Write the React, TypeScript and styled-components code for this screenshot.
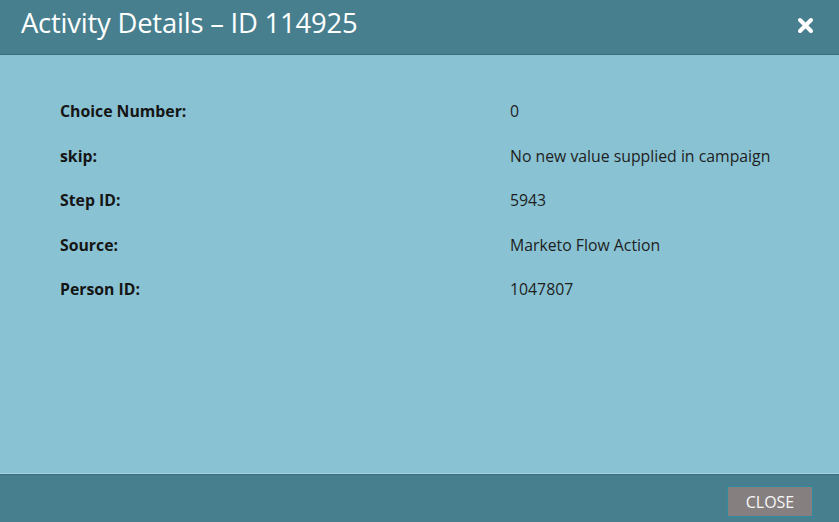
import React from "react";
import styled, { createGlobalStyle } from "styled-components";

const Global = createGlobalStyle`
  html, body { margin: 0; padding: 0; height: 100%; }
  body { font-family: "Open Sans", "DejaVu Sans", sans-serif; background: #89c3d3; }
  #root { height: 100%; }
`;

const Dialog = styled.div`
  width: 839px;
  height: 522px;
  display: flex;
  flex-direction: column;
  background: #89c3d3;
  overflow: hidden;
`;

const Header = styled.div`
  flex: none;
  height: 55px;
  box-sizing: border-box;
  background: #477f8f;
  border-bottom: 1px solid #3b6e7c;
  display: flex;
  align-items: center;
  justify-content: space-between;
  padding: 0 25px 0 21px;
`;

const Title = styled.h1`
  margin: 0;
  font-size: 27.4px;
  font-weight: 400;
  color: #ffffff;
  letter-spacing: -0.2px;
  line-height: 1;
  padding-bottom: 9px;
`;

const CloseIcon = styled.button`
  border: none;
  background: transparent;
  padding: 0;
  width: 18px;
  height: 18px;
  display: flex;
  align-items: center;
  justify-content: center;
  cursor: pointer;
  margin-bottom: 4px;
`;

const Body = styled.div`
  flex: 1;
  padding: 34px 0 0 60px;
`;

const Row = styled.div`
  display: grid;
  grid-template-columns: 450px 1fr;
  height: 44.5px;
  align-items: center;
  font-size: 15.8px;
  color: #1c1c1c;
`;

const Label = styled.div`
  font-weight: 700;
  color: #151515;
`;

const Value = styled.div`
  font-weight: 400;
  color: #1e1e1e;
`;

const Footer = styled.div`
  flex: none;
  height: 48px;
  box-sizing: border-box;
  background: #477f8f;
  border-top: 1px solid #3a6c79;
  box-shadow: 0 -1px 0 #a4d6e2;
  display: flex;
  justify-content: flex-end;
  align-items: center;
  padding: 0 26px 0 0;
`;

const Button = styled.button`
  width: 86px;
  height: 31px;
  box-sizing: border-box;
  background: #857f7f;
  border: 1px solid #2f8c9e;
  color: #f7f7f7;
  font-family: "Open Sans", "DejaVu Sans", sans-serif;
  font-size: 16px;
  padding: 0;
  margin-top: 6px;
  cursor: pointer;
`;

const rows: [string, string][] = [
  ["Choice Number:", "0"],
  ["skip:", "No new value supplied in campaign"],
  ["Step ID:", "5943"],
  ["Source:", "Marketo Flow Action"],
  ["Person ID:", "1047807"],
];

export default function App() {
  return (
    <>
      <Global />
      <Dialog>
        <Header>
          <Title>Activity Details – ID 114925</Title>
          <CloseIcon aria-label="Close">
            <svg width="17" height="17" viewBox="0 0 17 17">
              <path d="M3 3 L14 14 M14 3 L3 14" stroke="#ffffff" strokeWidth="4" strokeLinecap="round" />
            </svg>
          </CloseIcon>
        </Header>
        <Body>
          {rows.map(([l, v]) => (
            <Row key={l}>
              <Label>{l}</Label>
              <Value>{v}</Value>
            </Row>
          ))}
        </Body>
        <Footer>
          <Button>CLOSE</Button>
        </Footer>
      </Dialog>
    </>
  );
}
